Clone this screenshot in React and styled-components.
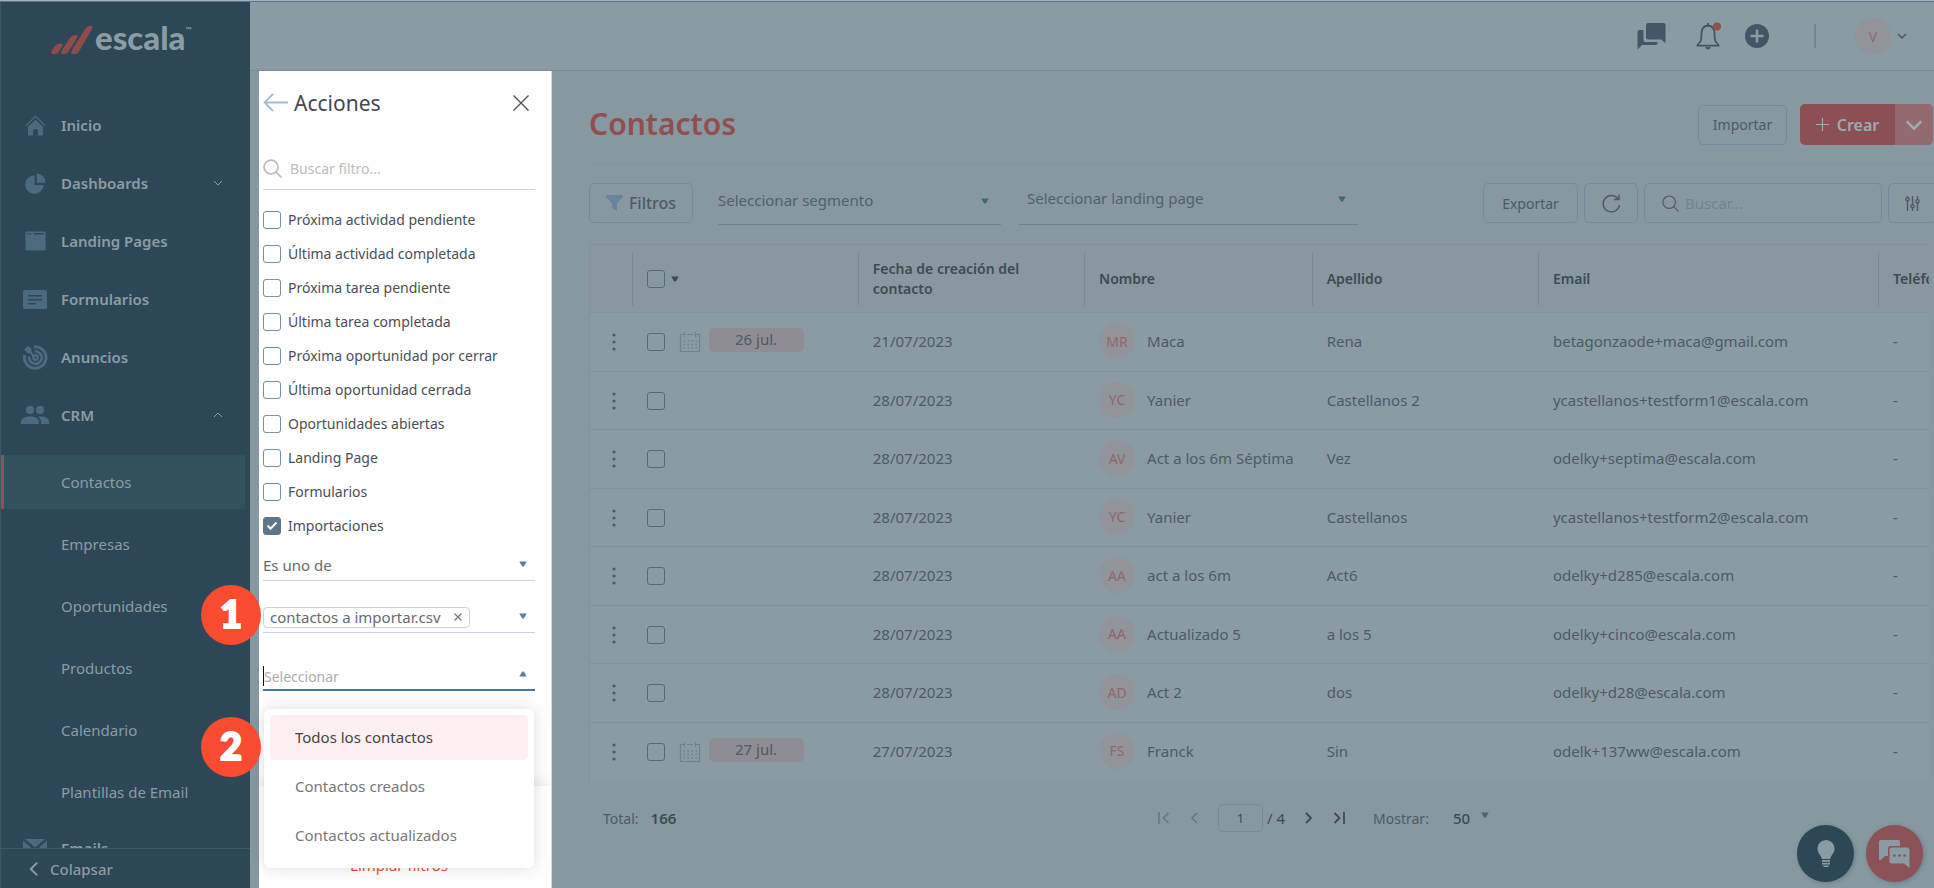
import React from "react";
import styled, { createGlobalStyle } from "styled-components";

const c = {
  dimHeader: "#8a9ba3",
  dimPage: "#8898a0",
  navy: "#2d4756",
  navText: "#8c9ca4",
  navIcon: "#4c6a7d",
  text: "#4c5b65",
  strong: "#3c4b56",
  icon: "#435666",
  line: "#7f919b",
  box: "#738b9b",
  red: "#8f4f52",
  blue: "#41677b",
};

const Global = createGlobalStyle`
  *, *::before, *::after { box-sizing: border-box; }
  body { margin: 0; background: ${c.dimPage}; font-family: "Noto Sans", "Open Sans", sans-serif; font-size: 15px; color: ${c.text}; }
  button, input, select { font: inherit; color: inherit; background: none; border: 0; padding: 0; margin: 0; outline: 0; }
  ul { list-style: none; margin: 0; padding: 0; }
  a { color: inherit; text-decoration: none; }
  svg { display: block; flex: none; }
`;

const Shell = styled.div`
  height: 100vh;
  display: flex;
  flex-direction: column;
  overflow: hidden;
  border-top: 1px solid #a7b0b8;
`;
const Body = styled.div`
  flex: 1;
  min-height: 0;
  display: flex;
  border-top: 1px solid #5d7390;
  position: relative;
`;

/* Sidebar */
const Sidebar = styled.aside`
  flex: none;
  width: 250px;
  display: flex;
  flex-direction: column;
  background: ${c.navy};
  color: ${c.navText};
  border-left: 1px solid #3d5564;
`;
const Logo = styled.a`
  flex: none;
  display: flex;
  align-items: flex-end;
  gap: 2px;
  height: 52px;
  padding-left: 50px;
`;
const LogoText = styled.span`
  font: 900 33px/34px Lato, sans-serif;
  display: flex;
  align-items: flex-start;
`;
const Tm = styled.sup`
  font: 700 8px/20px Lato, sans-serif;
`;
const Nav = styled.nav`
  flex: 1;
  min-height: 0;
  overflow: hidden;
  padding-top: 42px;
`;
const NavLink = styled.a`
  display: flex;
  align-items: center;
  height: 58px;
  padding-left: 20px;
  padding-right: 27px;
  font-size: 15px;
  font-weight: 600;
  svg:last-child:not(:first-child) { margin-left: auto; }
`;
const NavIcon = styled.span`
  width: 28px;
  margin-right: 12px;
  display: flex;
  justify-content: center;
  color: ${c.navIcon};
  svg { margin: 0 !important; }
`;
const SubList = styled.ul`
  padding-top: 11px;
  margin: 0 5px -8px 0;
`;
const SubLink = styled.a`
  display: flex;
  align-items: center;
  height: 54px;
  margin: 0 0 8px -1px;
  padding-left: 57px;
  font-size: 15px;
  border-left: 4px solid ${(p) => (p.$active ? "#86545a" : "transparent")};
  background: ${(p) => (p.$active ? "#33505d" : "none")};
`;
const Collapse = styled.button`
  flex: none;
  height: 40px;
  display: flex;
  align-items: center;
  gap: 8px;
  padding: 0 0 0 25px;
  border-top: 1px solid #3d5b66;
  font-weight: 500;
  font-size: 15px;
`;

/* Main area */
const Main = styled.div`
  flex: 1;
  min-width: 0;
  display: flex;
  flex-direction: column;
`;
const TopBar = styled.header`
  flex: none;
  height: 69px;
  display: flex;
  align-items: center;
  justify-content: flex-end;
  padding-right: 27px;
  background: ${c.dimHeader};
  border-bottom: 1px solid #7a8d97;
  color: ${c.icon};
`;
const IconButton = styled.button`
  display: grid;
  place-items: center;
  margin-right: ${(p) => p.$after || 0}px;
`;
const Divider = styled.span`
  width: 2px;
  height: 24px;
  background: #75868f;
  margin-right: 39px;
`;
const UserButton = styled.button`
  display: flex;
  align-items: center;
  gap: 6px;
`;
const Avatar = styled.span`
  flex: none;
  width: 36px;
  height: 36px;
  border-radius: 50%;
  display: grid;
  place-items: center;
  background: #91949b;
  color: #94666c;
  font-size: 14px;
`;
const Work = styled.div`
  flex: 1;
  min-height: 0;
  display: flex;
  padding-left: 9px;
`;

/* Filter panel */
const Panel = styled.section`
  flex: none;
  width: 293px;
  display: flex;
  flex-direction: column;
  background: #fff;
  color: #4a4f55;
  border-right: 1px solid #d4dbdf;
`;
const PanelBody = styled.div`
  flex: 1;
  padding: 0 16px 0 4px;
`;
const PanelHead = styled.div`
  height: 64px;
  display: flex;
  align-items: center;
  gap: 6px;
  button:last-child { margin-left: auto; margin-right: 6px; }
`;
const PanelTitle = styled.h2`
  margin: 0;
  font-size: 21px;
  font-weight: 400;
  color: #44474d;
`;
const PanelSearch = styled.label`
  display: flex;
  align-items: center;
  gap: 8px;
  height: 43px;
  margin-top: 12px;
  border-bottom: 1px solid #c5d9e6;
  color: #bdbdbd;
  font-size: 14px;
  input { width: 100%; }
  input::placeholder { color: #bdbdbd; opacity: 1; }
`;
const CheckList = styled.ul`
  margin-top: 13px;
`;
const CheckRow = styled.label`
  display: flex;
  align-items: center;
  gap: 7px;
  height: 34px;
  font-size: 14px;
  line-height: 18px;
`;
const CheckWrap = styled.span`
  flex: none;
  display: grid;
  place-items: center;
  color: #fff;
  > * { grid-area: 1 / 1; }
  svg { pointer-events: none; }
`;
const CheckInput = styled.input`
  appearance: none;
  width: 18px;
  height: 18px;
  border: 1px solid ${(p) => p.$tone || "#7392a4"};
  border-radius: 3px;
  &:checked { background: #5f7688; border-color: #5f7688; }
`;
const Field = styled.div`
  position: relative;
  display: flex;
  align-items: center;
  height: ${(p) => p.$height}px;
  margin-top: ${(p) => p.$top}px;
  border-bottom: ${(p) => (p.$focus ? "2px solid #3c7ba0" : "1px solid #c3d6ea")};
  padding-right: 8px;
  color: #666b70;
  input { flex: 1; min-width: 0; height: 22px; font-size: 14px; }
  input::placeholder { color: #adadad; opacity: 1; }
  > svg { color: #5f7f93; margin-bottom: 4px; }
`;
const Select = styled.select`
  appearance: none;
  flex: 1;
  min-width: 0;
  padding-bottom: 2px;
`;
const Caret = styled.span`
  width: 1px;
  height: 20px;
  background: #111;
`;
const Chip = styled.span`
  display: flex;
  align-items: center;
  gap: 13px;
  height: 21px;
  padding: 0 7px 2px 6px;
  border: 1px solid #cdd3d8;
  border-radius: 4px;
  white-space: nowrap;
`;
const Menu = styled.ul`
  position: absolute;
  z-index: 2;
  top: calc(100% + 20px);
  left: 1px;
  right: 1px;
  height: 159px;
  padding: 6px;
  border-radius: 6px;
  background: #fff;
  box-shadow: 0 0 16px rgba(0, 0, 0, 0.14);
`;
const Option = styled.li`
  display: flex;
  align-items: center;
  height: 45px;
  margin-bottom: 4px;
  padding: 0 0 2px 25px;
  border-radius: 5px;
  color: ${(p) => (p.$active ? "#444" : "#777")};
  background: ${(p) => (p.$active ? "#fef0f0" : "none")};
`;
const PanelFoot = styled.div`
  flex: none;
  height: 102px;
  padding: 62px 0 0;
  display: flex;
  justify-content: center;
  align-items: flex-start;
  background: #fff;
  box-shadow: 0 -4px 14px rgba(0, 0, 0, 0.08);
  clip-path: inset(-30px 0 0 0);
  button { height: 34px; margin-right: 12px; color: #f0503c; font-size: 15px; }
`;

/* Contacts page */
const Page = styled.main`
  flex: 1;
  min-width: 0;
  padding-left: 37px;
  display: flex;
  flex-direction: column;
`;
const PageHead = styled.div`
  flex: none;
  height: 94px;
  display: flex;
  align-items: center;
  gap: 13px;
  padding: 14px 0 0;
  border-bottom: 1px dotted #7c9099;
`;
const Title = styled.h1`
  margin: 0 auto 2px 0;
  font-size: 30px;
  line-height: 40px;
  font-weight: 600;
  color: ${c.red};
`;
const Button = styled.button`
  flex: none;
  display: flex;
  align-items: center;
  justify-content: center;
  gap: 6px;
  width: ${(p) => p.$width}px;
  height: 40px;
  border: 1px solid ${c.box};
  border-radius: 5px;
  font-size: ${(p) => p.$size || 14}px;
  font-weight: ${(p) => p.$weight || 400};
`;
const Split = styled.div`
  display: flex;
  height: 41px;
  border-radius: 5px;
  overflow: hidden;
  color: #9dabb1;
  margin-right: 1px;
`;
const SplitMain = styled.button`
  width: 95px;
  display: flex;
  align-items: center;
  justify-content: center;
  gap: 8px;
  background: #8c5054;
  font-size: 16px;
  font-weight: 600;
`;
const SplitMore = styled.button`
  width: 38px;
  display: grid;
  place-items: center;
  background: #926a6f;
`;
const Tools = styled.div`
  flex: none;
  height: 79px;
  display: flex;
  align-items: center;
  gap: 6px;
  padding-bottom: 3px;
`;
const Dropdown = styled.div`
  flex: 0 1 ${(p) => p.$basis}px;
  display: flex;
  align-items: flex-start;
  height: 44px;
  padding: 0 12px 0 ${(p) => p.$pad || 0}px;
  margin-left: ${(p) => p.$before}px;
  border-bottom: 1px solid #6e848e;
  color: #4f626d;
  select { height: ${(p) => p.$line}px; }
  svg { color: ${c.blue}; margin: ${(p) => p.$line / 2 - 3}px 0 0; }
`;
const Right = styled.div`
  display: flex;
  gap: 6px;
  margin-left: auto;
  margin-right: -3px;
`;
const SearchBox = styled.label`
  width: 238px;
  height: 40px;
  display: flex;
  align-items: center;
  gap: 6px;
  padding: 0 17px;
  border: 1px solid ${c.box};
  border-radius: 5px;
  input { width: 100%; }
  input::placeholder { color: #72858f; opacity: 1; }
`;
const TableWrap = styled.div`
  flex: none;
  margin-right: 5px;
  overflow: hidden;
`;
const Table = styled.table`
  width: 100%;
  table-layout: fixed;
  border-collapse: separate;
  border-spacing: 0;
  background: ${c.dimHeader};
  border-left: 1px solid #80939c;
  border-top: 1px solid #80939c;
  white-space: nowrap;
`;
const Row = styled.tr`
  &:nth-child(odd) td { height: 59px; }
  &:last-child td { height: 58px; border-bottom-color: transparent; }
`;
const Cell = styled.td`
  height: 58px;
  padding: 0 0 ${(p) => (p.$text ? 2 : 0)}px ${(p) => (p.$tight ? 0 : 15)}px;
  border-bottom: 1px solid ${c.line};
  overflow: hidden;
`;
const HeadCell = styled.th`
  height: 68px;
  padding: 0;
  background: #8997a0;
  border-bottom: 1px dotted ${c.line};
  text-align: left;
  font-size: 14px;
  line-height: 20px;
  font-weight: 600;
  color: ${c.strong};
  white-space: normal;
`;
const HeadInner = styled.div`
  height: 54px;
  padding-left: 14px;
  padding-right: 14px;
  display: flex;
  align-items: center;
  gap: 6px;
  border-left: 1px solid ${(p) => (p.$bare ? "transparent" : "#788a94")};
`;
const Inline = styled.div`
  display: flex;
  align-items: center;
  gap: ${(p) => p.$gap}px;
`;
const Dots = styled.button`
  display: block;
  margin: 0 auto;
  padding-left: 6px;
`;
const DateChip = styled.span`
  width: 95px;
  height: 24px;
  border-radius: 5px;
  background: #8e8d96;
  text-align: center;
  line-height: 23px;
  margin: 0 0 4px -6px;
`;
const PageFoot = styled.footer`
  flex: none;
  display: flex;
  align-items: center;
  height: 74px;
  padding-left: 14px;
`;
const Total = styled.div`
  flex: 0 0 555px;
  font-size: 14px;
  b { margin-left: 12px; color: ${c.strong}; font-weight: 600; font-size: 15px; }
`;
const Pager = styled.div`
  display: flex;
  align-items: center;
  gap: 18px;
  color: ${c.strong};
`;
const PageInput = styled.label`
  display: flex;
  align-items: center;
  gap: 4px;
  input { width: 45px; height: 28px; border: 1px solid ${c.box}; border-radius: 5px; text-align: center; font-size: 13px; }
`;
const PageSize = styled.label`
  display: flex;
  align-items: center;
  margin-left: 10px;
  font-size: 14px;
  color: ${c.text};
  select { appearance: none; width: 28px; margin-left: 24px; font-size: 15px; font-weight: 500; color: ${c.strong}; }
  svg { color: ${c.blue}; margin-bottom: 6px; }
`;

/* Things that float over the page */
const Floating = styled.div`
  position: absolute;
  right: 11px;
  bottom: 6px;
  display: flex;
  gap: 12px;
`;
const Round = styled.button`
  width: 57px;
  height: 57px;
  border-radius: 50%;
  display: grid;
  place-items: center;
  color: #8a9ba3;
  background: ${(p) => p.$bg};
  box-shadow: 1px 1px 4px rgba(40, 60, 75, 0.3);
`;
const Step = styled.span`
  position: absolute;
  z-index: 3;
  left: 201px;
  top: ${(p) => p.$top}px;
  width: 60px;
  height: 60px;
  border-radius: 50%;
  background: #fb4b31;
  color: #fff;
  display: grid;
  place-items: center;
  font: 900 38px/56px Lato, sans-serif;
  -webkit-text-stroke: 2px #fff;
  padding-bottom: 4px;
`;

/* Drawings */
const Chevron = ({ d = "down", size = 10, w = 1.5 }) => {
  const paths = { down: "M1 3l4 4 4-4", up: "M1 7l4-4 4 4", left: "M7 1L3 5l4 4", right: "M3 1l4 4-4 4" };
  return (
    <svg width={size} height={size} viewBox="0 0 10 10" fill="none" stroke="currentColor" strokeWidth={w}>
      <path d={paths[d]} />
    </svg>
  );
};
const Tri = ({ up }) => (
  <svg width="8" height="6" viewBox="0 0 8 6" fill="currentColor">
    <path d={up ? "M.3 5.6h7.4L5 .8Q4 0 3 .8z" : "M.3.4h7.4L5 5.2Q4 6 3 5.2z"} />
  </svg>
);
const Lens = ({ size, w }) => (
  <svg width={size} height={size} viewBox="0 0 18 18" fill="none" stroke="currentColor" strokeWidth={w}>
    <circle cx="7.6" cy="7.6" r="6.6" />
    <path d="M12.4 12.4l5 5" />
  </svg>
);
const Filled = ({ w = 24, h = 24, box = "0 0 24 24", children }) => (
  <svg width={w} height={h} viewBox={box} fill="currentColor">{children}</svg>
);
const icons = {
  home: (
    <Filled w={21} h={21} box="0 0 21 21">
      <path d="M10.500 4.800l7.500 7v7.700q0 1-1 1h-4v-5q0-1.500-2.500-1.500T8 15.500v5H4q-1 0-1-1v-7.700z" />
      <path d="M.8 10.700L10.500 1.300l9.700 9.400" fill="none" stroke="currentColor" strokeWidth="1.300" />
    </Filled>
  ),
  pie: (
    <Filled w={21} h={21} box="0 0 21 21">
      <path d="M9.500 2.200V12h9.300A9.300 9.300 0 1 1 9.500 2.200z" />
      <path d="M11.800.5a9 9 0 0 1 8.700 9.200h-8.700z" />
    </Filled>
  ),
  window: (
    <Filled w={21} h={20} box="0 0 21 20">
      <path fillRule="evenodd" d="M1.500.5h18q1 0 1 1v17q0 1-1 1h-18q-1 0-1-1v-17q0-1 1-1zM9 2v1.500h10V2zM2 2v1.500h1.500V2zm2.500 0v1.500H6V2z" />
    </Filled>
  ),
  form: (
    <Filled w={24} h={19} box="0 0 24 19">
      <path fillRule="evenodd" d="M1.500 0h21Q24 0 24 1.500v16q0 1.500-1.500 1.500h-21Q0 19 0 17.500v-16Q0 0 1.500 0zM5 5v1.500h14V5zm0 4v1.500h14V9zm0 4v1.500h8V13z" />
    </Filled>
  ),
  target: (
    <svg width="25" height="25" viewBox="0 0 25 25" fill="none" stroke="currentColor">
      <path d="M11 1.800A10.800 10.800 0 1 1 1.700 10" strokeWidth="3" />
      <path d="M11.500 6.300a6.300 6.300 0 1 1-5.300 5.200" strokeWidth="2.600" />
      <circle cx="12.500" cy="12.500" r="2.300" strokeWidth="2.200" />
      <path d="M3 3.500l9 8.500" strokeWidth="2" />
      <path d="M1 4.500L5 .8l3.500 3v4.600L4.500 8z" fill="currentColor" stroke="none" />
    </svg>
  ),
  people: (
    <Filled w={28} h={18} box="0 0 28 18">
      <circle cx="9" cy="4" r="4" />
      <circle cx="19" cy="4" r="4" />
      <path d="M0 18v-2.500Q1 10.500 9 10.300q8 .2 9 5.200V18z" />
      <path d="M20 18v-2.500q-.2-3-3-5 10-.8 11 5V18z" />
    </Filled>
  ),
  mail: (
    <Filled w={24} h={18} box="0 0 24 18">
      <path d="M2 0h20l-10 8.500zM0 1.500L8 8.500 0 16zM24 1.500l-8 7 8 7.500zM9.500 9.500L12 11.500l2.500-2L23 18H1z" />
    </Filled>
  ),
};

const Calendar = () => (
  <svg width="22" height="22" viewBox="0 0 22 22" fill="none" stroke="#71828c" strokeWidth="1">
    <path d="M5 3.500H1.500v17h19v-17H17M8 3.500h6M5.500 1v5M16.500 1v5" strokeWidth="1.200" />
    {[10, 13.500, 17].map((y) => (
      <path key={y} d={`M4.500 ${y}h14`} strokeWidth="1.500" strokeDasharray="1.500 2.500" />
    ))}
  </svg>
);

const nav = [
  ["Inicio", "home"],
  ["Dashboards", "pie", "down"],
  ["Landing Pages", "window"],
  ["Formularios", "form"],
  ["Anuncios", "target"],
  ["CRM", "people", "up"],
];
const sub = ["Contactos", "Empresas", "Oportunidades", "Productos", "Calendario", "Plantillas de Email"];
const filters = [
  "Próxima actividad pendiente",
  "Última actividad completada",
  "Próxima tarea pendiente",
  "Última tarea completada",
  "Próxima oportunidad por cerrar",
  "Última oportunidad cerrada",
  "Oportunidades abiertas",
  "Landing Page",
  "Formularios",
  "Importaciones",
];
const rows = [
  ["26 jul.", "21/07/2023", "MR", "Maca", "Rena", "betagonzaode+maca@gmail.com"],
  ["", "28/07/2023", "YC", "Yanier", "Castellanos 2", "ycastellanos+testform1@escala.com"],
  ["", "28/07/2023", "AV", "Act a los 6m Séptima", "Vez", "odelky+septima@escala.com"],
  ["", "28/07/2023", "YC", "Yanier", "Castellanos", "ycastellanos+testform2@escala.com"],
  ["", "28/07/2023", "AA", "act a los 6m", "Act6", "odelky+d285@escala.com"],
  ["", "28/07/2023", "AA", "Actualizado 5", "a los 5", "odelky+cinco@escala.com"],
  ["", "28/07/2023", "AD", "Act 2", "dos", "odelky+d28@escala.com"],
  ["27 jul.", "27/07/2023", "FS", "Franck", "Sin", "odelk+137ww@escala.com"],
];

const NavItem = ({ label, icon, arrow }) => (
  <li>
    <NavLink href="#">
      <NavIcon>{icons[icon]}</NavIcon>
      {label}
      {arrow && <Chevron d={arrow} w={1} />}
    </NavLink>
  </li>
);

function SideNav() {
  return (
    <Sidebar>
      <Logo href="#" aria-label="escala">
        <svg width="42" height="28" viewBox="0 0 42 28" fill="#8d4c4b">
          <path d="M1 28Q-.5 27 1 24l3-4q2-2.500 5-2.500h1q2.500 0 1 3l-3 5q-1.500 2.500-4 2.500z" />
          <path d="M11 28q-1.500-1 0-4l8-12q2-3 5-3h1q2.500 0 1 3L17.500 25.500Q16 28 13.500 28z" />
          <path d="M21 28q-1.500-1 0-4L34 3q2-3 5-3h1q2.500 0 1 3L28 25.500Q26.500 28 24 28z" />
        </svg>
        <LogoText>escala<Tm>™</Tm></LogoText>
      </Logo>
      <Nav>
        <ul>
          {nav.map(([label, icon, arrow]) => (
            <NavItem key={label} label={label} icon={icon} arrow={arrow} />
          ))}
        </ul>
        <SubList>
          {sub.map((s, i) => (
            <li key={s}><SubLink href="#" $active={i === 0}>{s}</SubLink></li>
          ))}
        </SubList>
        <ul><NavItem label="Emails" icon="mail" /></ul>
      </Nav>
      <Collapse><Chevron d="left" size={16} w={1.2} />Colapsar</Collapse>
    </Sidebar>
  );
}

function Header() {
  return (
    <TopBar>
      <IconButton $after={30} aria-label="Mensajes">
        <Filled w={29} h={27} box="0 0 29 27">
          <path d="M11 0h15.500q2 0 2 2v18l-4.500-3.500H11q-2 0-2-2V2q0-2 2-2z" />
          <path d="M6.500 7v10q0 2 2 2H20.500v1q0 2-2 2H5L.5 26.500V9q0-2 2-2z" />
        </Filled>
      </IconButton>
      <IconButton $after={23} aria-label="Notificaciones">
        <svg width="26" height="28" viewBox="0 0 26 28" fill="none" stroke="currentColor" strokeWidth="1.800">
          <path d="M12 3.500q-6.500.7-6.500 8 0 7-1.800 9L1.500 23v.7h21V23l-2.200-2.500q-1.800-2-1.800-9 0-7.300-6.500-8z" />
          <path d="M12 1v2.500M10 25q2 3 4 0" />
          <circle cx="21" cy="4.500" r="4" fill="#8f5050" stroke="none" />
        </svg>
      </IconButton>
      <IconButton $after={45} aria-label="Añadir">
        <svg width="24" height="24" viewBox="0 0 24 24">
          <circle cx="12" cy="12" r="12" fill="currentColor" />
          <path d="M12 5.500v13M5.500 12h13" stroke={c.dimHeader} strokeWidth="2.600" />
        </svg>
      </IconButton>
      <Divider />
      <UserButton><Avatar>V</Avatar><Chevron /></UserButton>
    </TopBar>
  );
}

function Filters() {
  return (
    <Panel>
      <PanelBody>
        <PanelHead>
          <IconButton aria-label="Volver">
            <svg width="25" height="20" viewBox="0 0 25 20" fill="none" stroke="#9fbdd3" strokeWidth="1.800">
              <path d="M25 9.500H1.500M10 1L1.500 9.500 10 18" />
            </svg>
          </IconButton>
          <PanelTitle>Acciones</PanelTitle>
          <IconButton aria-label="Cerrar">
            <svg width="16" height="16" viewBox="0 0 16 16" stroke="#555" strokeWidth="1.400"><path d="M.5.5l15 15M15.500.5l-15 15" /></svg>
          </IconButton>
        </PanelHead>
        <PanelSearch>
          <Lens size={19} w={1.6} />
          <input aria-label="Buscar filtro" placeholder="Buscar filtro..." />
        </PanelSearch>
        <CheckList>
          {filters.map((f) => (
            <li key={f}>
              <CheckRow>
                <CheckWrap>
                  <CheckInput type="checkbox" defaultChecked={f === "Importaciones"} />
                  <svg width="12" height="12" viewBox="0 0 12 12" fill="none" stroke="currentColor" strokeWidth="2"><path d="M1.500 5.500l3 3.200L10.500 2.500" /></svg>
                </CheckWrap>
                {f}
              </CheckRow>
            </li>
          ))}
        </CheckList>
        <Field $height={29} $top={9}>
          <Select aria-label="Condición"><option>Es uno de</option></Select>
          <Tri />
        </Field>
        <Field $height={30} $top={22}>
          <Chip>contactos a importar.csv
            <IconButton aria-label="Quitar">
              <svg width="8" height="8" viewBox="0 0 8 8" stroke="#777" strokeWidth="1.200"><path d="M.5.5l7 7M7.500.5l-7 7" /></svg>
            </IconButton>
          </Chip>
          <input aria-label="Importaciones" />
          <Tri />
        </Field>
        <Field $height={28} $top={30} $focus>
          <Caret />
          <input aria-label="Tipo de contactos" placeholder="Seleccionar" />
          <Tri up />
          <Menu role="listbox">
            <Option role="option" aria-selected="true" $active>Todos los contactos</Option>
            <Option role="option" aria-selected="false">Contactos creados</Option>
            <Option role="option" aria-selected="false">Contactos actualizados</Option>
          </Menu>
        </Field>
      </PanelBody>
      <PanelFoot><button>Limpiar filtros</button></PanelFoot>
    </Panel>
  );
}

function Contacts() {
  return (
    <Page>
      <PageHead>
        <Title>Contactos</Title>
        <Button $width={89}>Importar</Button>
        <Split>
          <SplitMain>
            <svg width="13" height="13" viewBox="0 0 13 13" stroke="currentColor" strokeWidth="1.200"><path d="M6.500 0v13M0 6.500h13" /></svg>
            Crear
          </SplitMain>
          <SplitMore aria-label="Más opciones"><Chevron size={18} w={1.5} /></SplitMore>
        </Split>
      </PageHead>
      <Tools>
        <Button $width={104} $size={16} $weight={500}>
          <Filled w={17} h={16} box="0 0 17 16"><path d="M.3 0h16.400v2L11 8.500V16l-5-3V8.500L.3 2z" fill="#66859a" /></Filled>
          Filtros
        </Button>
        <Dropdown $basis={283} $before={19} $line={40}>
          <Select aria-label="Segmento"><option>Seleccionar segmento</option></Select>
          <Tri />
        </Dropdown>
        <Dropdown $basis={339} $before={12} $pad={8} $line={36}>
          <Select aria-label="Landing page"><option>Seleccionar landing page</option></Select>
          <Tri />
        </Dropdown>
        <Right>
          <Button $width={95}>Exportar</Button>
          <Button $width={54} aria-label="Actualizar">
            <svg width="19" height="19" viewBox="0 0 19 19" fill="none" stroke="currentColor" strokeWidth="1.500">
              <path d="M17.500 11A8.200 8.200 0 1 1 16 4.800M17 .5v5h-5" />
            </svg>
          </Button>
          <SearchBox>
            <Lens size={17} w={1.2} />
            <input aria-label="Buscar" placeholder="Buscar..." />
          </SearchBox>
          <Button $width={49} aria-label="Columnas">
            <svg width="15" height="15" viewBox="0 0 15 15" fill="none" stroke="currentColor" strokeWidth="1.400">
              <path d="M2.500 0v1.500M2.500 5v10M7.500 0v8.500M7.500 12v3M12.500 0v3.500M12.500 7v8" />
              <circle cx="2.500" cy="3.200" r="1.600" /><circle cx="7.500" cy="10.200" r="1.600" /><circle cx="12.500" cy="5.200" r="1.600" />
            </svg>
          </Button>
        </Right>
      </Tools>
      <TableWrap>
        <Table>
          <colgroup>
            {["3.1%", "16.9%", "16.9%", "17%", "16.9%", "25.4%", "3.8%"].map((w, i) => <col key={i} width={w} />)}
          </colgroup>
          <thead>
            <tr>
              <HeadCell><HeadInner $bare /></HeadCell>
              <HeadCell>
                <HeadInner><CheckInput type="checkbox" aria-label="Seleccionar todos" $tone="#4c6c82" /><Tri /></HeadInner>
              </HeadCell>
              {["Fecha de creación del contacto", "Nombre", "Apellido", "Email", "Teléfono"].map((h) => (
                <HeadCell key={h}><HeadInner>{h}</HeadInner></HeadCell>
              ))}
            </tr>
          </thead>
          <tbody>
            {rows.map(([due, date, ini, name, last, mail]) => (
              <Row key={mail}>
                <Cell $tight>
                  <Dots aria-label="Opciones">
                    <Filled w={4} h={18} box="0 0 4 18"><circle cx="2" cy="2" r="1.600" /><circle cx="2" cy="9" r="1.600" /><circle cx="2" cy="16" r="1.600" /></Filled>
                  </Dots>
                </Cell>
                <Cell>
                  <Inline $gap={14}>
                    <CheckInput type="checkbox" aria-label={`Seleccionar ${name}`} $tone="#4c6c82" />
                    {due && <Calendar />}
                    {due && <DateChip>{due}</DateChip>}
                  </Inline>
                </Cell>
                <Cell $text>{date}</Cell>
                <Cell $text><Inline $gap={12}><Avatar>{ini}</Avatar>{name}</Inline></Cell>
                <Cell $text>{last}</Cell>
                <Cell $text>{mail}</Cell>
                <Cell $text>-</Cell>
              </Row>
            ))}
          </tbody>
        </Table>
      </TableWrap>
      <PageFoot>
        <Total>Total:<b>166</b></Total>
        <Pager>
          <IconButton aria-label="Primera"><svg width="12" height="12" viewBox="0 0 12 12" fill="none" stroke="#667985" strokeWidth="1.600"><path d="M1 0v12M10.500 1l-5 5 5 5" /></svg></IconButton>
          <IconButton aria-label="Anterior"><svg width="12" height="12" viewBox="0 0 12 12" fill="none" stroke="#667985" strokeWidth="1.600"><path d="M9 1L4 6l5 5" /></svg></IconButton>
          <PageInput><input aria-label="Página" defaultValue="1" />/ 4</PageInput>
          <IconButton aria-label="Siguiente"><svg width="12" height="12" viewBox="0 0 12 12" fill="none" stroke="currentColor" strokeWidth="1.800"><path d="M3 1l5 5-5 5" /></svg></IconButton>
          <IconButton aria-label="Última"><svg width="12" height="12" viewBox="0 0 12 12" fill="none" stroke="currentColor" strokeWidth="1.800"><path d="M11 0v12M1.500 1l5 5-5 5" /></svg></IconButton>
          <PageSize>Mostrar:<select defaultValue="50"><option>50</option></select><Tri /></PageSize>
        </Pager>
      </PageFoot>
    </Page>
  );
}

export default function App() {
  return (
    <Shell>
      <Global />
      <Body>
        <SideNav />
        <Main>
          <Header />
          <Work>
            <Filters />
            <Contacts />
          </Work>
        </Main>
        <Floating>
          <Round $bg={c.navy} aria-label="Ideas">
            <Filled w={18} h={28} box="0 0 18 28">
              <path d="M9 0a8.600 8.600 0 0 1 8.600 8.600q0 3.400-2.600 6.400Q13.500 17 13 19H5q-.5-2-2-4Q.4 12 .4 8.600A8.600 8.600 0 0 1 9 0zM5 20h8v1.800H5zM5 22.800h8v1.800H5zM6.500 25.500h5V27h-5z" />
            </Filled>
          </Round>
          <Round $bg="#8b5257" aria-label="Chat">
            <svg width="32" height="28" viewBox="0 0 32 28" fill="currentColor">
              <path d="M2 0h17q2 0 2 2v4H11.500Q9 6 9 8.500V16H6l-5 4.500L0 20V2Q0 0 2 0z" />
              <path d="M12.500 7.500H28q2.500 0 2.500 2V28L25 23.500H12.500q-2 0-2-2v-12q0-2 2-2z" />
              <g fill="#8b5257"><circle cx="15.500" cy="15.500" r="1.300" /><circle cx="20.500" cy="15.500" r="1.300" /><circle cx="25.500" cy="15.500" r="1.300" /></g>
            </svg>
          </Round>
        </Floating>
        <Step $top={583}>1</Step>
        <Step $top={715}>2</Step>
      </Body>
    </Shell>
  );
}
